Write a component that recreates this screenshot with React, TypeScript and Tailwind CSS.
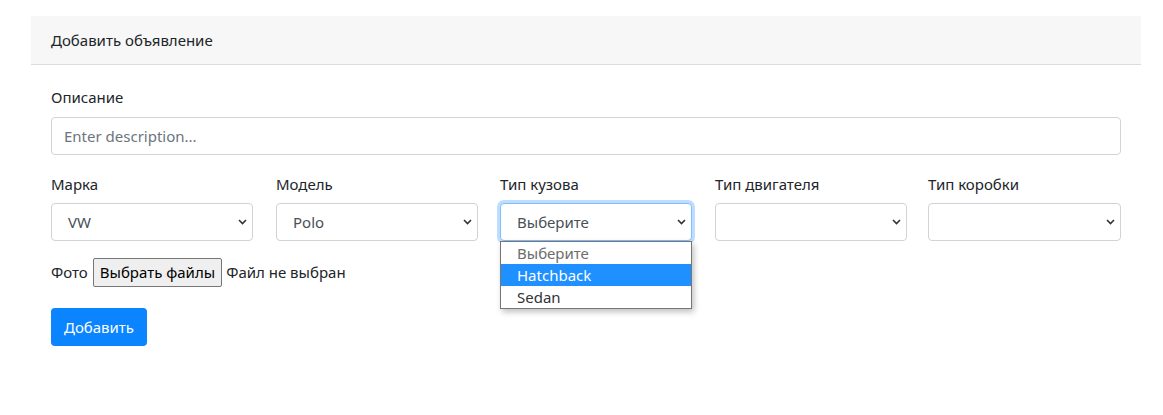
import React from "react";

const F = { fontFamily: '"Noto Sans", "Open Sans", sans-serif' };

function Chevron() {
  return (
    <svg width="9" height="6" viewBox="0 0 9 6" className="absolute right-[5px] top-1/2 -translate-y-1/2">
      <path d="M1 1 L4.5 4.5 L8 1" fill="none" stroke="#333" strokeWidth="1.6" />
    </svg>
  );
}

function Select({ label, value, w, focused, children }: { label: string; value?: string; w: string; focused?: boolean; children?: React.ReactNode }) {
  return (
    <div className={`${w} flex flex-col`}>
      <label className="text-[15px] leading-6 text-[#212529] mb-[7px]">{label}</label>
      <div className="relative">
        <div
          className={`h-[38px] rounded-[4px] border bg-white flex items-center pl-4 text-[15px] text-[#495057] relative ${
            focused ? "border-[#80bdff] shadow-[0_0_0_3px_rgba(0,123,255,0.25)]" : "border-[#ced4da]"
          }`}
        >
          {value}
          <Chevron />
        </div>
        {children}
      </div>
    </div>
  );
}

export default function App() {
  return (
    <div className="w-[1163px] h-[415px] bg-white pt-4 px-[31px]" style={F}>
      <div className="w-[1110px]">
        <div className="h-[49px] bg-[#f7f7f7] border-b border-[#dcdcdc] flex items-center px-5 text-[15px] text-[#212529]">
          Добавить объявление
        </div>
        <div className="px-5 pt-5">
          <label className="block text-[15px] leading-6 text-[#212529] mb-2">Описание</label>
          <div className="h-[38px] rounded-[4px] border border-[#ced4da] flex items-center px-3 text-[15px] text-[#6c757d]">
            Enter description...
          </div>
          <div className="flex mt-[17px]">
            <Select label="Марка" value="VW" w="w-[202px]" />
            <div className="w-[23px] shrink-0" />
            <Select label="Модель" value="Polo" w="w-[202px]" />
            <div className="w-[22px] shrink-0" />
            <Select label="Тип кузова" value="Выберите" w="w-[192px]" focused>
              <div className="absolute left-0 top-[38px] w-[192px] bg-white border border-[#767676] shadow-[2px_3px_6px_rgba(0,0,0,0.25)] z-10 text-[15px] leading-[22px]">
                <div className="pl-4 text-[#6d6d6d]">Выберите</div>
                <div className="pl-4 bg-[#1e90ff] text-white">Hatchback</div>
                <div className="pl-4 text-[#333]">Sedan</div>
              </div>
            </Select>
            <div className="w-[23px] shrink-0" />
            <Select label="Тип двигателя" w="w-[192px]" />
            <div className="w-[21px] shrink-0" />
            <Select label="Тип коробки" w="w-[193px]" />
          </div>
          <div className="flex items-center mt-[17px] text-[15px] text-[#212529] h-[29px]">
            <span>Фото</span>
            <span className="ml-[5px] h-[29px] px-[6px] border border-[#767676] rounded-[2px] bg-[#efefef] flex items-center text-black">
              Выбрать файлы
            </span>
            <span className="ml-[4px]">Файл не выбран</span>
          </div>
          <div className="mt-[21px]">
            <span className="inline-flex items-center justify-center h-[38px] w-[96px] rounded-[4px] bg-[#0a84ff] text-white text-[15px]">
              Добавить
            </span>
          </div>
        </div>
      </div>
    </div>
  );
}
